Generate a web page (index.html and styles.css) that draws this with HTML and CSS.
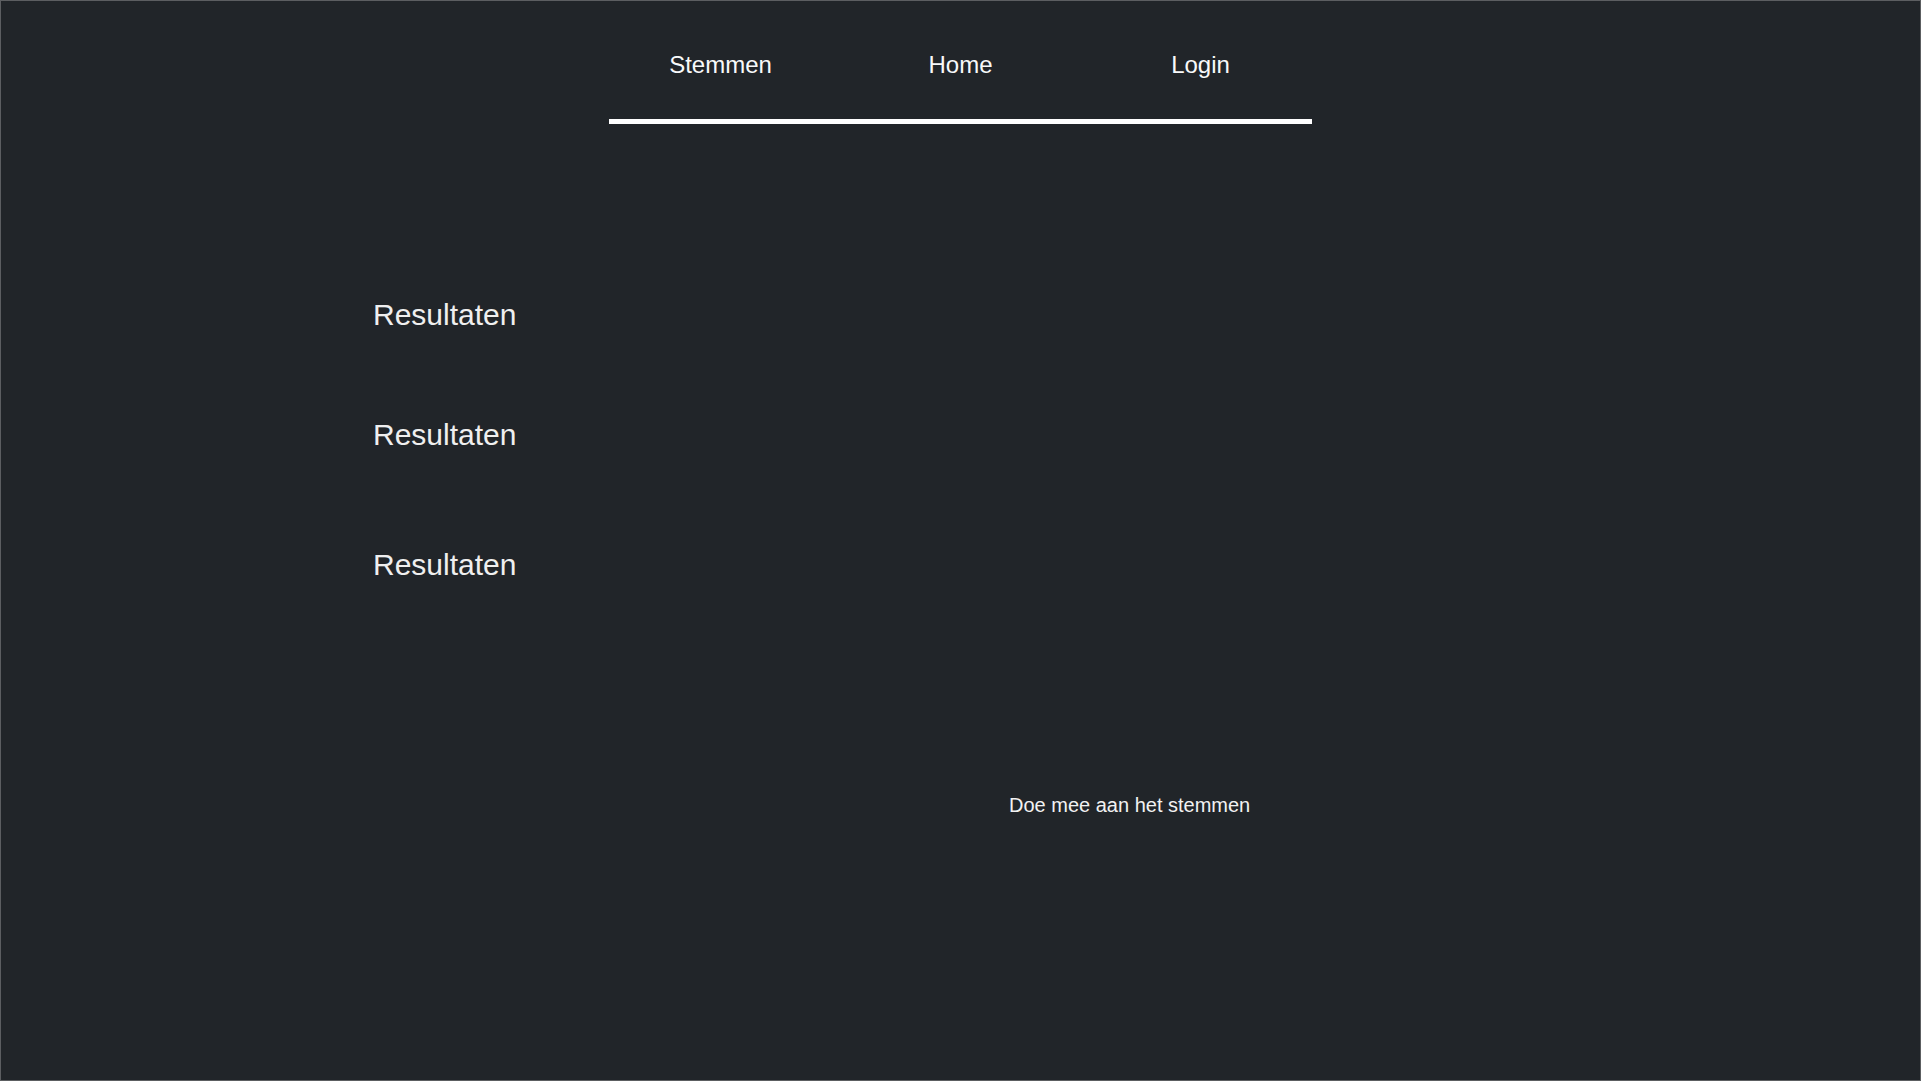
FILE: index.html
```html
<!DOCTYPE html>
<html lang="nl">
<head>
<meta charset="utf-8">
<title>Stemmen</title>
<link rel="stylesheet" href="styles.css">
</head>
<body>
<div class="page">
  <header class="header">
    <nav class="nav">
      <a class="nav-link" href="#">Stemmen</a>
      <a class="nav-link" href="#">Home</a>
      <a class="nav-link" href="#">Login</a>
    </nav>
    <div class="nav-bar"></div>
  </header>
  <main class="content">
    <h2 class="result result-1">Resultaten</h2>
    <h2 class="result result-2">Resultaten</h2>
    <h2 class="result result-3">Resultaten</h2>
  </main>
  <footer class="footer">
    <p class="cta">Doe mee aan het stemmen</p>
  </footer>
</div>
</body>
</html>
```
FILE: styles.css
```css
html, body {
  margin: 0;
  padding: 0;
  background: #212529;
}
body {
  font-family: "Liberation Sans", Arial, sans-serif;
  color: #f2f2f2;
}
.page {
  box-sizing: border-box;
  min-height: 100vh;
  border: 1px solid #5c5e61;
  background: #212529;
}
.header {
  padding-top: 50px;
}
.nav {
  display: flex;
  justify-content: center;
  width: 720px;
  margin: 0 auto;
}
.nav-link {
  flex: 0 0 240px;
  text-align: center;
  font-size: 24px;
  line-height: 28px;
  color: #f8f9fa;
  text-decoration: none;
}
.nav-bar {
  width: 703px;
  height: 5px;
  margin: 40px auto 0;
  background: #ffffff;
}
.content {
  padding-left: 372px;
  padding-top: 174px;
}
.result {
  margin: 0;
  font-size: 30px;
  font-weight: normal;
  line-height: 34px;
  color: #efefef;
}
.result-2 {
  margin-top: 86px;
}
.result-3 {
  margin-top: 96px;
}
.footer {
  padding-left: 1008px;
  padding-top: 212px;
}
.cta {
  margin: 0;
  font-size: 20px;
  line-height: 23px;
  color: #f2f2f2;
}
```
